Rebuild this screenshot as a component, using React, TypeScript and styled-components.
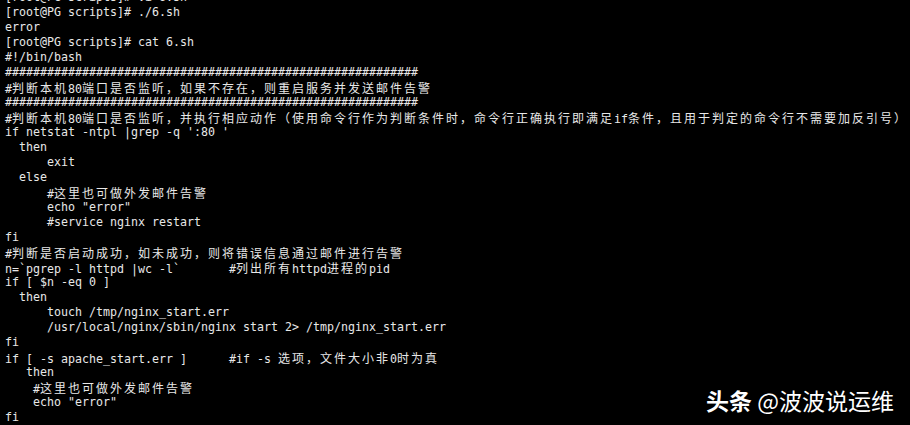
import React from "react";
import styled, { createGlobalStyle } from "styled-components";

const Global = createGlobalStyle`
  html, body {
    margin: 0;
    padding: 0;
    background: #000;
    width: 910px;
    height: 425px;
    overflow: hidden;
  }
`;

const Screen = styled.div`
  position: relative;
  width: 910px;
  height: 425px;
  background: #000;
  overflow: hidden;
`;

const Terminal = styled.div`
  display: flex;
  flex-direction: column;
  margin-top: -10px;
  padding-left: 5px;
  color: #e8e8e8;
  font-family: "DejaVu Sans Mono", "Liberation Mono", monospace;
  font-size: 11.63px;
  line-height: 15px;
`;

const Line = styled.div`
  height: 15px;
  white-space: pre;
`;

const Wide = styled.span`
  font-family: "Noto Sans CJK SC", "Noto Sans CJK JP", sans-serif;
  font-size: 12px;
  letter-spacing: 2px;
  line-height: 15px;
`;

const Watermark = styled.div`
  position: absolute;
  right: 16px;
  bottom: 10px;
  color: #fff;
  font-family: "Noto Sans CJK SC", sans-serif;
  font-size: 23px;
  line-height: 30px;
  text-shadow: 0 0 3px rgba(0, 0, 0, 0.9), 1px 1px 2px rgba(0, 0, 0, 0.9);
  white-space: pre;
`;

const Brand = styled.span`
  font-weight: 700;
`;

const lines: string[] = [
  "[root@PG scripts]# vi 6.sh",
  "[root@PG scripts]# ./6.sh",
  "error",
  "[root@PG scripts]# cat 6.sh",
  "#!/bin/bash",
  "#".repeat(59),
  "#判断本机80端口是否监听，如果不存在，则重启服务并发送邮件告警",
  "#".repeat(59),
  "#判断本机80端口是否监听，并执行相应动作（使用命令行作为判断条件时，命令行正确执行即满足if条件，且用于判定的命令行不需要加反引号）",
  "if netstat -ntpl |grep -q ':80 '",
  "  then",
  "      exit",
  "  else",
  "      #这里也可做外发邮件告警",
  '      echo "error"',
  "      #service nginx restart",
  "fi",
  "#判断是否启动成功，如未成功，则将错误信息通过邮件进行告警",
  "n=`pgrep -l httpd |wc -l`       #列出所有httpd进程的pid",
  "if [ $n -eq 0 ]",
  "  then",
  "      touch /tmp/nginx_start.err",
  "      /usr/local/nginx/sbin/nginx start 2> /tmp/nginx_start.err",
  "fi",
  "if [ -s apache_start.err ]      #if -s 选项，文件大小非0时为真",
  "   then",
  "    #这里也可做外发邮件告警",
  '    echo "error"',
  "fi",
];

const isWide = (ch: string) => /[\u3000-\u9fff\uff00-\uffef]/.test(ch);

function renderLine(text: string) {
  const parts: React.ReactNode[] = [];
  let buf = "";
  let wide = false;
  const flush = (key: number) => {
    if (!buf) return;
    parts.push(wide ? <Wide key={key}>{buf}</Wide> : <React.Fragment key={key}>{buf}</React.Fragment>);
    buf = "";
  };
  Array.from(text).forEach((ch, i) => {
    const w = isWide(ch);
    if (w !== wide) {
      flush(i);
      wide = w;
    }
    buf += ch;
  });
  flush(text.length + 1);
  return parts;
}

export default function App() {
  return (
    <>
      <Global />
      <Screen>
        <Terminal>
          {lines.map((l, i) => (
            <Line key={i}>{renderLine(l)}</Line>
          ))}
        </Terminal>
        <Watermark>
          <Brand>头条</Brand> @波波说运维
        </Watermark>
      </Screen>
    </>
  );
}
